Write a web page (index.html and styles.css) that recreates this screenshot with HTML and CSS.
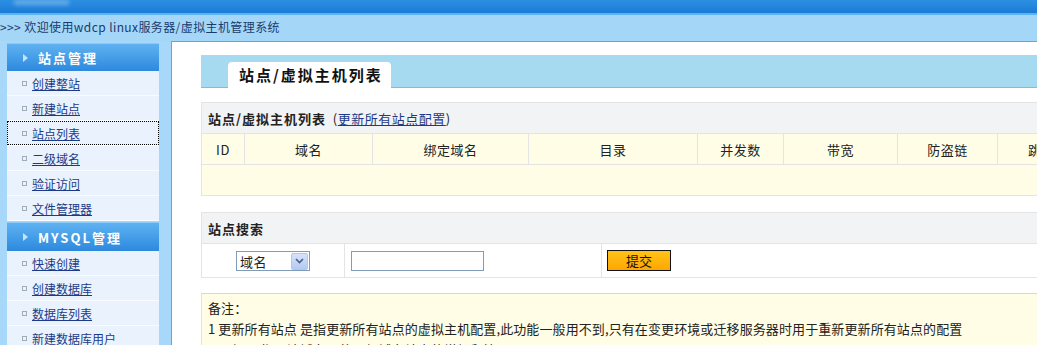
FILE: index.html
```html
<!DOCTYPE html>
<html lang="zh-CN">
<head>
  <meta charset="UTF-8">
  <title>wdcp 管理系统</title>
  <link rel="stylesheet" href="styles.css">
</head>
<body>

  <div class="topbar"><span class="logo"></span></div>
  <div class="welcome">&gt;&gt;&gt; 欢迎使用wdcp linux服务器/虚拟主机管理系统</div>

  <div class="layout">
    <!-- left menu -->
    <aside class="sidebar">
      <div class="menu-head"><span class="tri"></span>站点管理</div>
      <ul class="menu">
        <li><a href="#">创建整站</a></li>
        <li><a href="#">新建站点</a></li>
        <li><a href="#" class="current">站点列表</a></li>
        <li><a href="#">二级域名</a></li>
        <li><a href="#">验证访问</a></li>
        <li><a href="#">文件管理器</a></li>
      </ul>
      <div class="menu-head second"><span class="tri"></span>MYSQL管理</div>
      <ul class="menu">
        <li><a href="#">快速创建</a></li>
        <li><a href="#">创建数据库</a></li>
        <li><a href="#">数据库列表</a></li>
        <li><a href="#">新建数据库用户</a></li>
      </ul>
    </aside>

    <main class="panel">
      <div class="tabbar">
        <div class="tab">站点/虚拟主机列表</div>
      </div>

      <!-- site list -->
      <table class="grid list">
        <colgroup>
          <col style="width:43px"><col style="width:128px"><col style="width:156px"><col style="width:169px">
          <col style="width:86px"><col style="width:114px"><col style="width:100px"><col style="width:88px"><col style="width:120px">
        </colgroup>
        <tr class="caption">
          <td colspan="9"><b>站点/虚拟主机列表</b> &nbsp;(<a href="#">更新所有站点配置</a>)</td>
        </tr>
        <tr class="head">
          <td>ID</td><td>域名</td><td>绑定域名</td><td>目录</td><td>并发数</td><td>带宽</td><td>防盗链</td><td>跳转</td><td>操作</td>
        </tr>
        <tr class="empty">
          <td colspan="9"></td>
        </tr>
      </table>

      <!-- search -->
      <table class="grid search">
        <colgroup>
          <col style="width:143px"><col style="width:257px"><col style="width:604px">
        </colgroup>
        <tr class="caption">
          <td colspan="3"><b>站点搜索</b></td>
        </tr>
        <tr class="form-row">
          <td class="center">
            <span class="select"><span class="value">域名</span><span class="drop"><svg width="9" height="6" viewBox="0 0 9 6"><path d="M1 1l3.5 3.5L8 1" fill="none" stroke="#4a5f86" stroke-width="1.6"/></svg></span></span>
          </td>
          <td><input type="text" class="text-input"></td>
          <td><button class="submit">提交</button></td>
        </tr>
      </table>

      <div class="notes">
        <p>备注：</p>
        <p>1 更新所有站点 是指更新所有站点的虚拟主机配置,此功能一般用不到,只有在变更环境或迁移服务器时用于重新更新所有站点的配置</p>
        <p>2 二级 是指用该域名下的二级域名站点的增加和管理</p>
      </div>
    </main>
  </div>

</body>
</html>
```

FILE: styles.css
```css
body {
  margin: 0;
  height: 345px;
  overflow: hidden;
  background: #a7d8fa;
  font-family: "Noto Sans CJK SC", "Liberation Sans", sans-serif;
  font-size: 12px;
  color: #222;
}

a {
  color: #1d3a86;
}

/* top banner */
.topbar {
  height: 13px;
  background: linear-gradient(#2b8fe2, #1c7bd6);
  border-bottom: 2px solid #5db3f0;
  overflow: hidden;
}

.logo {
  display: inline-block;
  width: 55px;
  height: 5px;
  margin-left: 14px;
  background: rgba(255, 255, 255, 0.3);
  filter: blur(2px);
  vertical-align: top;
}

.welcome {
  height: 26px;
  line-height: 24px;
  background: #a4d6f8;
  color: #1b3b6c;
  letter-spacing: 0.4px;
  white-space: nowrap;
}

.layout {
  display: flex;
  align-items: flex-start;
}

/* sidebar */
.sidebar {
  width: 152px;
  margin: 2px 0 0 7px;
  flex-shrink: 0;
}

.menu-head {
  height: 27px;
  line-height: 27px;
  border-top: 1px solid #8ccaf6;
  background: linear-gradient(#5fb2f1, #2d89de);
  color: #fff;
  font-weight: bold;
  font-size: 13px;
  letter-spacing: 2px;
  display: flex;
  align-items: center;
}

.menu-head.second {
  margin-top: 1px;
  height: 28px;
}

.tri {
  width: 0;
  height: 0;
  border-top: 4px solid transparent;
  border-bottom: 4px solid transparent;
  border-left: 5px solid #c3e4fb;
  margin: 0 10px 0 16px;
}

.menu {
  list-style: none;
  margin: 0;
  padding: 0;
}

.menu li {
  height: 24px;
  background: #eaf3fd;
  border-bottom: 1px solid #f9fcff;
}

.menu a {
  display: flex;
  align-items: center;
  height: 24px;
  padding-left: 15px;
  color: #1d3a86;
}

.menu a::before {
  content: "";
  width: 3px;
  height: 3px;
  border: 1px solid #9eabb9;
  margin-right: 5px;
}

.menu a.current {
  outline: 1px dotted #000;
  outline-offset: -1px;
}

/* main panel */
.panel {
  flex: 1;
  min-width: 0;
  margin-left: 12px;
  height: 320px;
  background: #fff;
  border-left: 1px solid #5ea8dc;
  border-top: 1px solid #5ea8dc;
  padding: 13px 0 0 29px;
  overflow: hidden;
}

.tabbar {
  height: 32px;
  background: #a6daf0;
  border-bottom: 1px solid #7cbde2;
  display: flex;
  align-items: flex-end;
  padding-left: 27px;
}

.tab {
  width: 152px;
  height: 26px;
  line-height: 26px;
  padding-left: 11px;
  margin-bottom: -1px;
  background: #fff;
  border-radius: 4px 4px 0 0;
  font-size: 15px;
  font-weight: bold;
  letter-spacing: 2px;
  color: #111;
}

/* tables */
.grid {
  border-collapse: collapse;
  table-layout: fixed;
  width: 1004px;
  margin-top: 14px;
  font-size: 13px;
  letter-spacing: 0.5px;
}

.grid td {
  border: 1px solid #e4e4e4;
  height: 30px;
  padding: 0 6px;
  white-space: nowrap;
  overflow: hidden;
}

.grid .caption td {
  background: #f2f3f5;
}

.grid .caption b {
  letter-spacing: 1px;
}

.list .head td {
  background: #fffde6;
  text-align: center;
  padding: 0;
}

.list .empty td {
  background: #fffde6;
}

.search {
  margin-top: 16px;
}

.search .form-row td {
  height: 33px;
  background: #fff;
  padding-left: 5px;
}

.search .form-row td.center {
  text-align: center;
  padding: 0;
}

.select {
  display: inline-flex;
  align-items: center;
  justify-content: space-between;
  width: 72px;
  height: 18px;
  border: 1px solid #7f9db9;
  background: #fff;
  vertical-align: middle;
  text-align: left;
}

.select .value {
  padding-left: 3px;
}

.drop {
  display: flex;
  align-items: center;
  justify-content: center;
  width: 15px;
  height: 15px;
  margin-right: 1px;
  border: 1px solid #b2c7ee;
  border-radius: 2px;
  background: linear-gradient(#d6e3fa, #b4caf2);
}

.text-input {
  width: 127px;
  height: 16px;
  border: 1px solid #7f9db9;
  padding: 1px 2px;
  vertical-align: middle;
  margin-left: 1px;
}

.submit {
  width: 64px;
  height: 21px;
  border: 1px solid #111;
  background: linear-gradient(#ffc21a, #ffa700);
  font-family: inherit;
  font-size: 13px;
  color: #111;
  padding: 0;
  vertical-align: middle;
}

/* notes */
.notes {
  margin-top: 15px;
  background: #fffde6;
  border-top: 1px solid #f0d98a;
  border-left: 1px solid #f0e3b0;
  padding: 3px 6px;
  font-size: 13px;
  letter-spacing: 0.1px;
  white-space: nowrap;
}

.notes p {
  margin: 0;
  line-height: 21px;
}
```
